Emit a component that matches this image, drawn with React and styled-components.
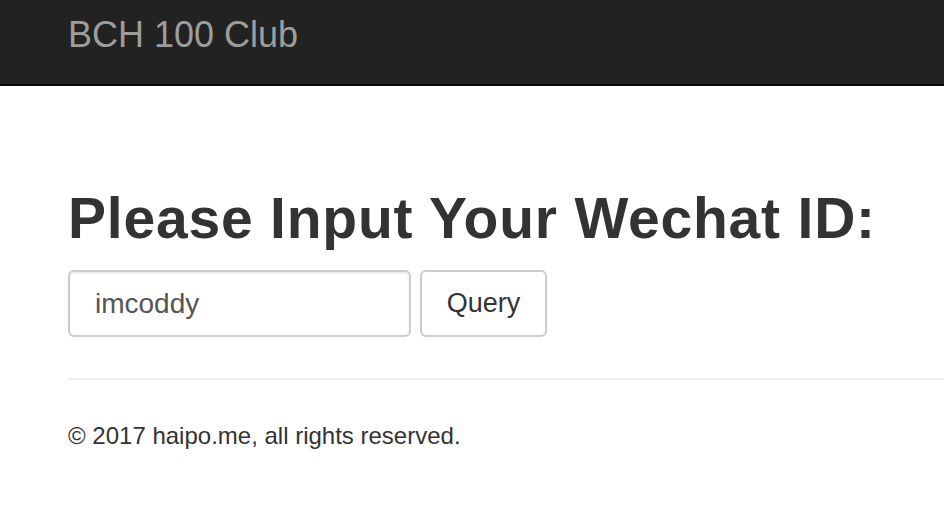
import styled, { createGlobalStyle } from "styled-components"
import { useState } from "react"

const GlobalStyle = createGlobalStyle`
    html, body {
        margin: 0;
        padding: 0;
        background: #fff;
        font-family: "Liberation Sans", Arial, Helvetica, sans-serif;
        color: #333;
    }
    * { box-sizing: border-box; }
`

const Navbar = styled.nav`
    height: 86px;
    background-color: #222;
    border-bottom: 2px solid #080808;
    padding-left: 68px;
    padding-top: 17px;
`
const Brand = styled.a`
    display: block;
    font-size: 36px;
    line-height: 36px;
    color: #9d9d9d;
    text-decoration: none;
`
const Container = styled.main`
    padding-left: 68px;
`
const Title = styled.h1`
    margin: 101px 0 0;
    font-size: 57px;
    line-height: 62px;
    letter-spacing: 0.8px;
    font-weight: 700;
    color: #333;
`
const QueryForm = styled.form`
    display: flex;
    gap: 9px;
    margin-top: 21px;
`
const IdInput = styled.input`
    width: 343px;
    height: 67px;
    padding: 0 25px;
    border: 2px solid #ccc;
    border-radius: 6px;
    box-shadow: inset 0 2px 2px rgba(0, 0, 0, 0.075);
    font-family: inherit;
    font-size: 28px;
    color: #555;
    outline: none;
`
const QueryButton = styled.button`
    width: 127px;
    height: 67px;
    padding: 0;
    border: 2px solid #ccc;
    border-radius: 6px;
    background: #fff;
    font-family: inherit;
    font-size: 27px;
    color: #333;
    cursor: pointer;
`
const Rule = styled.hr`
    margin: 41px 0 0;
    border: 0;
    border-top: 2px solid #eee;
`
const Footer = styled.footer`
    margin-top: 39px;
    font-size: 24px;
    line-height: 34px;
    color: #333;
`

export default function App() {
    const [wechatId, setWechatId] = useState("imcoddy")

    return (
        <>
            <GlobalStyle />
            <Navbar>
                <Brand href="#">BCH 100 Club</Brand>
            </Navbar>
            <Container>
                <Title>Please Input Your Wechat ID:</Title>
                <QueryForm onSubmit={e => e.preventDefault()}>
                    <IdInput value={wechatId} onChange={e => setWechatId(e.target.value)} />
                    <QueryButton type="submit">Query</QueryButton>
                </QueryForm>
                <Rule />
                <Footer>© 2017 haipo.me, all rights reserved.</Footer>
            </Container>
        </>
    )
}
